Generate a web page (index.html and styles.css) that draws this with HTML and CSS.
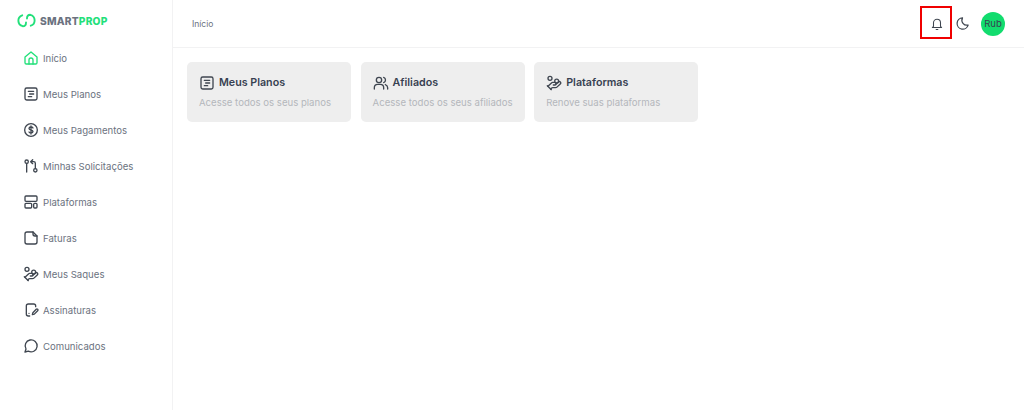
FILE: index.html
```html
<!DOCTYPE html>
<html lang="pt-BR">
<head>
	<meta charset="UTF-8">
	<title>SmartProp</title>
	<link rel="stylesheet" href="styles.css">
</head>
<body>
	<div class="app">
		<aside class="sidebar">
			<div class="logo">
				<svg class="logo-icon" viewBox="0 0 20 15" fill="none" stroke="#22e07a" stroke-width="2" stroke-linecap="round">
					<path d="M5.500 2A6 6 0 0 0 6 13.500C8 13.500 9.500 12 9.500 9.500"/>
					<path d="M14.500 13A6 6 0 0 0 14 1.500C12 1.500 10.500 3 10.500 5.500"/>
				</svg>
				<span class="logo-text">SMART<b>PROP</b></span>
			</div>
			<nav class="menu">
				<a class="menu-item">
					<svg class="icon icon-green" viewBox="0 0 24 24"><path d="M3 10.500 12 3l9 7.500V19a2 2 0 0 1-2 2H5a2 2 0 0 1-2-2z"/><path d="M9 21v-6a3 3 0 0 1 6 0v6"/></svg>
					<span>Início</span>
				</a>
				<a class="menu-item">
					<svg class="icon" viewBox="0 0 24 24"><rect x="3" y="3" width="18" height="18" rx="2.500"/><path d="M8 8h8M10 12h6M8 16h5"/></svg>
					<span>Meus Planos</span>
				</a>
				<a class="menu-item">
					<svg class="icon" viewBox="0 0 24 24"><circle cx="12" cy="12" r="9.500"/><path d="M15 9c-.5-1-1.500-1.500-3-1.500-1.800 0-3 .9-3 2.200 0 3 6 1.600 6 4.600 0 1.300-1.200 2.200-3 2.200-1.500 0-2.500-.5-3-1.500M12 6v12"/></svg>
					<span>Meus Pagamentos</span>
				</a>
				<a class="menu-item">
					<svg class="icon" viewBox="0 0 24 24"><circle cx="5.500" cy="5.500" r="2.500"/><path d="M5.500 8v13"/><circle cx="18.500" cy="18.500" r="2.500"/><path d="M18.500 16V8a2.500 2.500 0 0 0-2.500-2.500h-4M14.500 2.500l-3 3 3 3"/></svg>
					<span>Minhas Solicitações</span>
				</a>
				<a class="menu-item">
					<svg class="icon" viewBox="0 0 24 24"><rect x="3" y="3" width="18" height="8" rx="1.500"/><rect x="3" y="14" width="10" height="7" rx="1.500"/><rect x="16" y="14" width="5" height="7" rx="1.500"/></svg>
					<span>Plataformas</span>
				</a>
				<a class="menu-item">
					<svg class="icon" viewBox="0 0 24 24"><path d="M15 3H6a3 3 0 0 0-3 3v12a3 3 0 0 0 3 3h12a3 3 0 0 0 3-3V9z"/><path d="M15 3v3a3 3 0 0 0 3 3h3"/></svg>
					<span>Faturas</span>
				</a>
				<a class="menu-item">
					<svg class="icon" viewBox="0 0 24 24"><path d="M11 15h2a2 2 0 1 0 0-4h-3c-.6 0-1.100.2-1.400.6L3 17"/><path d="m7 21 1.600-1.400c.3-.4.8-.6 1.400-.6h4c1.100 0 2.100-.4 2.800-1.200l4.600-4.400a2 2 0 0 0-2.750-2.910l-4.200 3.900"/><path d="m2 16 6 6"/><circle cx="16" cy="9" r="2.900"/><circle cx="6" cy="5" r="3"/></svg>
					<span>Meus Saques</span>
				</a>
				<a class="menu-item">
					<svg class="icon" viewBox="0 0 24 24"><path d="M19 7V6a3 3 0 0 0-3-3H8a3 3 0 0 0-3 3v12a3 3 0 0 0 3 3h2"/><path d="M14 19l.8-3 5-5a1.500 1.500 0 0 1 2.200 2.200l-5 5z"/><path d="M9 17h.01"/></svg>
					<span>Assinaturas</span>
				</a>
				<a class="menu-item">
					<svg class="icon" viewBox="0 0 24 24"><path d="M3 21l1.500-4.500A9 9 0 1 1 8 19.800z"/></svg>
					<span>Comunicados</span>
				</a>
			</nav>
		</aside>
		<div class="content">
			<header class="topbar">
				<span class="crumb">Início</span>
				<div class="actions">
					<button class="bell">
						<svg class="icon-small" viewBox="0 0 24 24"><path d="M6 16V10a6 6 0 0 1 12 0v6l2 2H4z"/><path d="M10.500 21.500h3"/></svg>
					</button>
					<svg class="moon" viewBox="0 0 24 24"><path d="M12 3a9 9 0 1 0 9 11.500A8 8 0 0 1 12 3z"/></svg>
					<div class="avatar">Rub</div>
				</div>
			</header>
			<main class="cards">
				<div class="card">
					<div class="card-title">
						<svg class="icon" viewBox="0 0 24 24"><rect x="3" y="3" width="18" height="18" rx="2.500"/><path d="M8 8h8M10 12h6M8 16h5"/></svg>
						<span>Meus Planos</span>
					</div>
					<p class="card-text">Acesse todos os seus planos</p>
				</div>
				<div class="card">
					<div class="card-title">
						<svg class="icon" viewBox="0 0 24 24"><circle cx="9" cy="7.500" r="4"/><path d="M2 21v-2a5 5 0 0 1 5-5h4a5 5 0 0 1 5 5v2M16 3.700a4 4 0 0 1 0 7.600M22 21v-2a5 5 0 0 0-3.500-4.700"/></svg>
						<span>Afiliados</span>
					</div>
					<p class="card-text">Acesse todos os seus afiliados</p>
				</div>
				<div class="card">
					<div class="card-title">
						<svg class="icon" viewBox="0 0 24 24"><path d="M11 15h2a2 2 0 1 0 0-4h-3c-.6 0-1.100.2-1.400.6L3 17"/><path d="m7 21 1.600-1.400c.3-.4.8-.6 1.400-.6h4c1.100 0 2.100-.4 2.800-1.200l4.600-4.400a2 2 0 0 0-2.750-2.910l-4.200 3.900"/><path d="m2 16 6 6"/><circle cx="16" cy="9" r="2.900"/><circle cx="6" cy="5" r="3"/></svg>
						<span>Plataformas</span>
					</div>
					<p class="card-text">Renove suas plataformas</p>
				</div>
			</main>
		</div>
	</div>
	<div class="highlight"></div>
</body>
</html>
```

FILE: styles.css
```css
* {
	margin: 0;
	padding: 0;
	box-sizing: border-box;
	font-family: Inter, "Liberation Sans", sans-serif;
}
body {
	background: #fff;
	overflow: hidden;
}
.app {
	display: flex;
	height: 410px;
}
.sidebar {
	width: 173px;
	flex-shrink: 0;
	border-right: 1px solid #f2f2f3;
}
.logo {
	display: flex;
	align-items: center;
	gap: 4px;
	height: 40px;
	padding: 1px 0 0 17px;
}
.logo-icon {
	width: 19px;
	height: 15px;
}
.logo-text {
	font-size: 10.2px;
	font-weight: 800;
	letter-spacing: .2px;
	color: #6b7280;
}
.logo-text b {
	font-weight: 800;
	color: #22e07a;
}
.menu {
	display: flex;
	flex-direction: column;
}
.menu-item {
	display: flex;
	align-items: center;
	gap: 4px;
	height: 36px;
	padding-left: 23px;
	font-size: 9.6px;
	color: #6b7280;
}
.icon {
	width: 16px;
	height: 16px;
	flex-shrink: 0;
	fill: none;
	stroke: #3f4650;
	stroke-width: 2;
	stroke-linecap: round;
	stroke-linejoin: round;
}
.icon-green {
	stroke: #22e07a;
}
.content {
	flex: 1;
}
.topbar {
	display: flex;
	align-items: center;
	justify-content: space-between;
	height: 48px;
	padding: 0 19px 0 19px;
	border-bottom: 1px solid #f2f2f3;
}
.crumb {
	font-size: 8.5px;
	color: #6b7280;
}
.actions {
	display: flex;
	align-items: center;
	gap: 3px;
}
.bell {
	display: flex;
	align-items: center;
	justify-content: center;
	width: 32px;
	height: 33px;
	padding-left: 2px;
	background: none;
	border: none;
}
.icon-small {
	width: 14px;
	height: 14px;
	fill: none;
	stroke: #3f4650;
	stroke-width: 1.800;
	stroke-linecap: round;
	stroke-linejoin: round;
}
.moon {
	width: 15px;
	height: 15px;
	margin-right: 8px;
	fill: none;
	stroke: #3f4650;
	stroke-width: 2;
	stroke-linejoin: round;
}
.avatar {
	display: flex;
	align-items: center;
	justify-content: center;
	width: 24px;
	height: 24px;
	border-radius: 50%;
	background: #12dc6e;
	font-size: 9.5px;
	color: #374151;
}
.cards {
	display: flex;
	gap: 9.600px;
	padding: 14px 0 0 14px;
}
.card {
	width: 164px;
	height: 60px;
	padding: 12px;
	border-radius: 5px;
	background: #eeeeee;
}
.card-title {
	display: flex;
	align-items: center;
	gap: 4px;
	height: 17px;
	font-size: 10.7px;
	font-weight: 600;
	color: #374151;
}
.card-text {
	margin-top: 6px;
	font-size: 9.6px;
	color: #b4b7bc;
	white-space: nowrap;
}
/* marcação vermelha sobre o sino */
.highlight {
	position: absolute;
	left: 920px;
	top: 6px;
	width: 32px;
	height: 33px;
	border: 2px solid #f00000;
}
```
